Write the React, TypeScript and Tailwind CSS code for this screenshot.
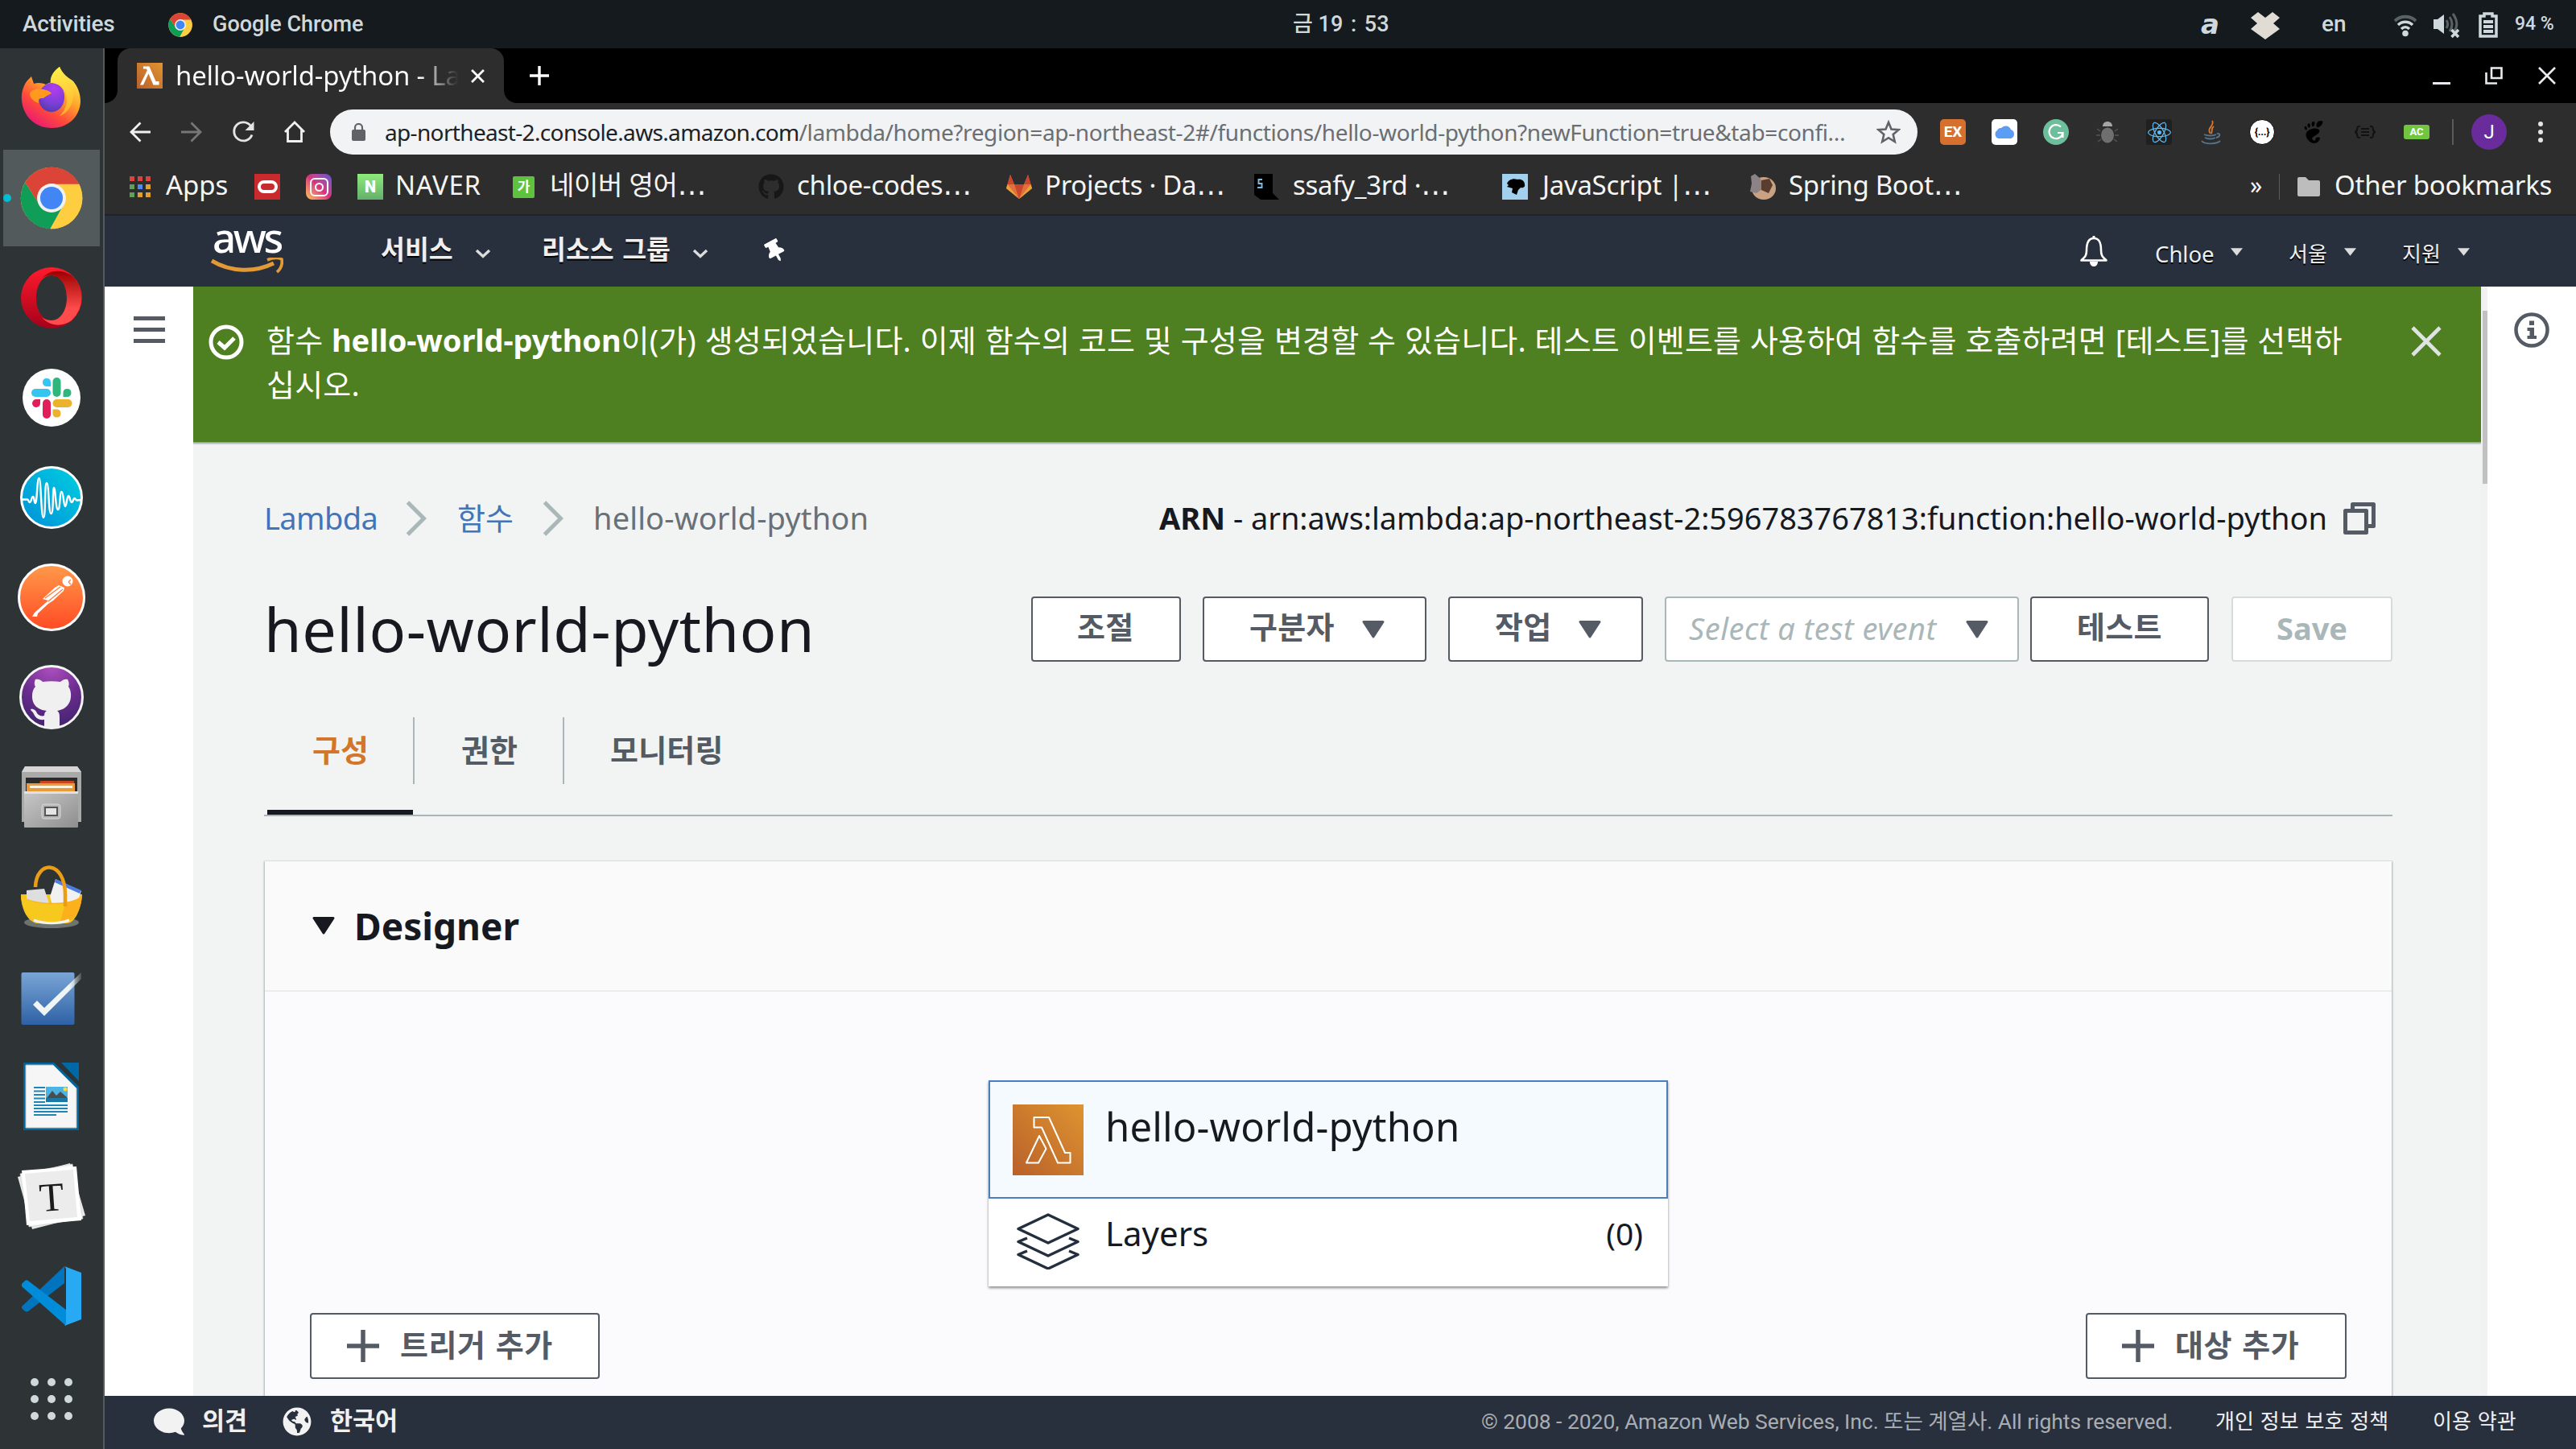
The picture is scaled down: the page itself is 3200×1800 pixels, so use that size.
import React from "react";
import { FaGithub, FaReact, FaThumbtack, FaGlobeAmericas, FaComment } from "react-icons/fa";
import { SiGnome } from "react-icons/si";

const NOTO = "font-['Noto_Sans','Noto_Sans_CJK_KR',sans-serif]";
const ROBOTO = "font-['Roboto','Noto_Sans_CJK_KR',sans-serif]";

type SvgProps = { className: string };

/* ---------- shared glyphs ---------- */

function ChromeLogo({ className }: SvgProps) {
  return (
    <svg viewBox="0 0 100 100" className={className}>
      <circle cx="50" cy="50" r="49" fill="#ffcd40" />
      <path d="M8 25 L31 61 L69 61 L48 99 A49 49 0 0 1 8 25 Z" fill="#0f9d58" />
      <path d="M50 28 H94 A49 49 0 0 1 48 99 L70 60 Z" fill="#ffcd40" />
      <path d="M8 25 A49 49 0 0 1 94 28 L50 28 L31 61 Z" fill="#db4437" />
      <circle cx="50" cy="50" r="23" fill="#f1f1f1" />
      <circle cx="50" cy="50" r="18" fill="#4285f4" />
    </svg>
  );
}

function LambdaFill({ className }: SvgProps) {
  return (
    <svg viewBox="0 0 32 32" className={className}>
      <defs>
        <linearGradient id="lf" x1="0" y1="1" x2="1" y2="0">
          <stop offset="0" stopColor="#b9602a" />
          <stop offset="1" stopColor="#e09432" />
        </linearGradient>
      </defs>
      <rect width="32" height="32" fill="url(#lf)" />
      <path d="M8 4.500h7.500l8 18.500h4v4.500h-7l-6-14-6.500 14H4l9-18.500-1.500-1.500H8z" fill="#fff" />
    </svg>
  );
}

function LambdaLine({ className }: SvgProps) {
  return (
    <svg viewBox="0 0 88 88" className={className}>
      <defs>
        <linearGradient id="ll" x1="0" y1="1" x2="1" y2="0">
          <stop offset="0" stopColor="#b9602a" />
          <stop offset="1" stopColor="#de9430" />
        </linearGradient>
      </defs>
      <rect width="88" height="88" fill="url(#ll)" />
      <g fill="none" stroke="#fff" strokeWidth="2" strokeLinejoin="round">
        <path d="M26.500 16H45L65 60H71.500V72.500H56L36 28.500H26.500Z" />
        <path d="M33 39L41.500 55L32 72.500H17Z" />
      </g>
    </svg>
  );
}

function Caret({ className }: SvgProps) {
  return (
    <svg viewBox="0 0 28 22" className={className}>
      <path d="M2 1.500H26L14 20Z" fill="currentColor" stroke="currentColor" strokeWidth="3" strokeLinejoin="round" />
    </svg>
  );
}

function NavChevron({ className }: SvgProps) {
  return (
    <svg viewBox="0 0 20 12" className={className}>
      <path d="M2 2L10 9.500L18 2" fill="none" stroke="#dcdcdc" strokeWidth="3.400" />
    </svg>
  );
}

function SmallCaret({ className }: SvgProps) {
  return (
    <svg viewBox="0 0 16 10" className={className}>
      <path d="M0 0H16L8 10Z" fill="#dcdcdc" />
    </svg>
  );
}

/* ---------- dock icons ---------- */

function Firefox() {
  return (
    <svg viewBox="0 0 76 78" className="mb-[2px] h-[78px] w-[76px]">
      <defs>
        <linearGradient id="ff1" x1="0.800" y1="0.100" x2="0.200" y2="1">
          <stop offset="0" stopColor="#fff04a" />
          <stop offset="0.350" stopColor="#ffa32b" />
          <stop offset="0.650" stopColor="#ff4a3a" />
          <stop offset="1" stopColor="#e5127e" />
        </linearGradient>
        <linearGradient id="ff3" x1="0.500" y1="0" x2="0.600" y2="1">
          <stop offset="0" stopColor="#fff04a" />
          <stop offset="1" stopColor="#ffb02c" />
        </linearGradient>
        <radialGradient id="ff2" cx="0.600" cy="0.200" r="0.900">
          <stop offset="0" stopColor="#b23cf0" />
          <stop offset="0.600" stopColor="#7a3fd6" />
          <stop offset="1" stopColor="#4a3a9c" />
        </radialGradient>
      </defs>
      <path d="M48 1C52 10 58 14 64 18C70 24 74 34 74 44C73 64 58 77 38 77C17 77 2 61 1 42C0 32 4 22 9 17L13 13L16 22C21 20 27 21 31 23C34 21 37 21 38 19C37 12 42 5 48 1Z" fill="url(#ff1)" />
      <path d="M22 40C22 28 30 21 40 21C49 22 55 30 54 40C53 51 46 57 38 57C29 57 22 50 22 40Z" fill="url(#ff2)" />
      <path d="M11 34C14 28 23 28 28 29C33 30 37 32 38 34C34 36 30 38 28 40C24 40 21 40 22 46C16 44 11 40 11 34Z" fill="#ff9a1f" />
      <path d="M48 1C38 8 36 16 37 21C48 21 58 30 57 45C55 54 52 58 48 62C60 58 68 44 66 20C57 16 51 9 48 1Z" fill="url(#ff3)" />
    </svg>
  );
}

function Opera() {
  return (
    <svg viewBox="0 0 78 78" className="h-[78px] w-[78px]">
      <defs>
        <linearGradient id="op1" x1="0" y1="0" x2="0" y2="1">
          <stop offset="0" stopColor="#ff1b2d" />
          <stop offset="1" stopColor="#a5001a" />
        </linearGradient>
        <linearGradient id="op2" x1="0" y1="0" x2="0" y2="1">
          <stop offset="0" stopColor="#9c0000" />
          <stop offset="0.700" stopColor="#ff4b4b" />
        </linearGradient>
      </defs>
      <path fillRule="evenodd" d="M39 1A38 38 0 1 0 39 77A38 38 0 1 0 39 1ZM39 11C50 11 58 23 58 39S50 67 39 67S20 55 20 39S28 11 39 11Z" fill="url(#op1)" />
      <path d="M27 15C36 4 50 3 64 11A38 38 0 0 1 64 67C52 76 36 74 27 63C31 66 35 67 39 67C50 67 58 55 58 39S50 11 39 11C34 11 30 12 27 15Z" fill="url(#op2)" />
    </svg>
  );
}

function Slack() {
  return (
    <svg viewBox="0 0 72 72" className="h-[72px] w-[72px]">
      <circle cx="36" cy="36" r="36" fill="#fff" />
      <g fill="#36c5f0"><rect x="11" y="25" width="24" height="10" rx="5" /><path d="M35 22H29.500a5 5 0 1 1 5.500-5.500Z" /></g>
      <g fill="#2eb67d"><rect x="37.500" y="11" width="10" height="24" rx="5" /><path d="M50.500 35V29.500a5 5 0 1 1 5.500 5.500Z" /></g>
      <g fill="#ecb22e"><rect x="37.500" y="38" width="24" height="10" rx="5" /><path d="M37.500 50.500H43a5 5 0 1 1-5.500 5.500Z" /></g>
      <g fill="#e01e5a"><rect x="25" y="38" width="10" height="24" rx="5" /><path d="M22 38V43a5 5 0 1 1-5.500-5Z" /></g>
    </svg>
  );
}

function Wave() {
  return (
    <svg viewBox="0 0 78 78" className="h-[78px] w-[78px]">
      <defs>
        <linearGradient id="wv" x1="0" y1="1" x2="1" y2="0">
          <stop offset="0" stopColor="#0090d8" />
          <stop offset="1" stopColor="#00cfe0" />
        </linearGradient>
      </defs>
      <circle cx="39" cy="39" r="37.500" fill="url(#wv)" stroke="#fff" strokeWidth="3" />
      <path d="M2 41.500H9C11 41.500 10 45 12 45S14 38 16 38S17 46 19 46C21 46 21 15 23.500 15S26 64 29 64S30 21 33 21S35 59 38.500 59S40 27 42 27S44 54 47 54S49 32 51.500 32S54 50 56 50S58 37 60 37S62 45 64 45S66 40 67.500 40S69 43 71 42.500L76 42" fill="none" stroke="#fff" strokeWidth="2.400" strokeLinejoin="round" />
    </svg>
  );
}

function Postman() {
  return (
    <svg viewBox="0 0 84 84" className="h-[84px] w-[84px]">
      <defs>
        <linearGradient id="pm" x1="0" y1="0" x2="0" y2="1">
          <stop offset="0" stopColor="#ff9a4a" />
          <stop offset="1" stopColor="#ff4a24" />
        </linearGradient>
      </defs>
      <circle cx="42" cy="42" r="40.500" fill="url(#pm)" stroke="#fff" strokeWidth="3" />
      <circle cx="62" cy="22" r="6.500" fill="#fff" />
      <path d="M51 27L58 30L57 34L44 46L38 50L25 62L24 66H18L21 61L38 46L31 44L46 30Z" fill="#fff" />
      <path d="M34 43L53 29M38 47L56 32M63 23L66 20M63 23L66 26" stroke="#ff7a3c" strokeWidth="1.200" fill="none" />
    </svg>
  );
}

function GithubDesktop() {
  return (
    <svg viewBox="0 0 80 80" className="h-[80px] w-[80px]">
      <defs>
        <radialGradient id="gd" cx="0.500" cy="0" r="1">
          <stop offset="0" stopColor="#b050c0" />
          <stop offset="0.550" stopColor="#6a2c8e" />
          <stop offset="1" stopColor="#42246e" />
        </radialGradient>
      </defs>
      <circle cx="40" cy="40" r="38.500" fill="url(#gd)" stroke="#f5f5f5" strokeWidth="3" />
      <path d="M20 18C24 17 27 19 29 21C36 20 44 20 51 21C54 18 58 17 60 18C62 21 62 25 61 27C65 32 65 42 62 47C59 53 53 56 47 57C50 59 50 62 50 66V77C43 79 37 79 31 77V68C23 69 20 65 18 61C17 58 14 57 14 55C18 54 21 57 22 60C24 63 28 64 31 63C31 60 32 58 34 57C26 56 21 53 18 48C15 42 15 32 20 27C18 24 19 20 20 18Z" fill="#f0f0f0" />
    </svg>
  );
}

function Files() {
  return (
    <svg viewBox="0 0 76 78" className="h-[78px] w-[76px]">
      <defs>
        <linearGradient id="fl" x1="0" y1="0" x2="1" y2="1">
          <stop offset="0" stopColor="#c8c8c8" />
          <stop offset="1" stopColor="#8e8e8e" />
        </linearGradient>
      </defs>
      <path d="M5 1H70L75 8V70H1V8Z" fill="#a9a9a9" />
      <path d="M5 1H70L75 8H1Z" fill="#d6d6d6" />
      <rect x="6" y="15" width="64" height="20" fill="#2b2b2b" />
      <path d="M24 19H66V35H20Z" fill="#c8451c" />
      <rect x="7" y="22" width="60" height="14" fill="#e89a3c" />
      <rect x="11" y="25" width="53" height="3" fill="#fff3dc" />
      <rect x="4" y="32" width="67" height="45" rx="1" fill="url(#fl)" />
      <path d="M4 32H71V35H4Z" fill="#e2e2e2" />
      <rect x="26" y="48" width="23" height="18" rx="3" fill="#b8b8b8" stroke="#d8d8d8" />
      <rect x="29" y="51" width="17" height="12" fill="#555" />
      <rect x="31" y="53" width="13" height="8" fill="#e4e4e4" />
    </svg>
  );
}

function Basket() {
  return (
    <svg viewBox="0 0 78 80" className="h-[80px] w-[78px]">
      <ellipse cx="39" cy="72" rx="34" ry="7" fill="#6e7370" />
      <path d="M1 37H77C76 55 68 73 58 73H20C9 70 1 55 1 37Z" fill="#f6c51e" />
      <path d="M8 32L30 30L36 48H8Z" fill="#dedede" />
      <path d="M44 18L76 33L72 44L40 50L37 40Z" fill="#f1f1f1" />
      <path d="M44 18L76 32L74 36L43 22Z" fill="#4d7de0" />
      <path d="M1 38C12 50 66 52 77 38C76 55 68 70 58 70C44 73 30 73 20 70C9 66 2 54 1 38Z" fill="#fbb01c" />
      <path d="M1 38C10 48 40 51 56 48L50 71C38 73 28 72 20 70C9 66 2 54 1 38Z" fill="#f7c91f" />
      <path d="M19 28C20 -6 56 -6 56 38V52" fill="none" stroke="#eb9d14" strokeWidth="4.500" />
      <path d="M17 69C30 74 48 74 61 69" stroke="#f3f3f3" strokeWidth="3" fill="none" />
    </svg>
  );
}

function Tasks() {
  return (
    <svg viewBox="0 0 76 68" className="mt-[6px] h-[68px] w-[76px]">
      <defs>
        <linearGradient id="tk" x1="0" y1="0" x2="0" y2="1">
          <stop offset="0" stopColor="#7aa5d6" />
          <stop offset="1" stopColor="#2e62a6" />
        </linearGradient>
        <linearGradient id="tk2" x1="0" y1="0" x2="1" y2="0">
          <stop offset="0.750" stopColor="#f0f4f4" />
          <stop offset="1" stopColor="#f0f4f4" stopOpacity="0.150" />
        </linearGradient>
      </defs>
      <rect x="0.500" y="1" width="66" height="65" rx="2" fill="url(#tk)" />
      <path d="M15 41L20 36L29 45L75 1V9L29 55Z" fill="url(#tk2)" />
    </svg>
  );
}

function Writer() {
  return (
    <svg viewBox="0 0 70 84" className="h-[84px] w-[70px]">
      <path d="M0 0H38L69 30V84H0Z" fill="#00659c" />
      <path d="M47 0H69V23Z" fill="#0069a5" />
      <path d="M3 3H37L66 32V81H3Z" fill="#f6f6f6" stroke="#c0c0c0" />
      <g stroke="#1f85b5" strokeWidth="2">
        <path d="M13 31H27M13 35.500H27M13 40H27M13 44.500H27M13 49H27M13 53H55M13 57H55M13 61H55M13 65H41" />
      </g>
      <rect x="28" y="30" width="27" height="19" fill="#4cb4e4" />
      <path d="M29 44L36 35L41 41L46 36L54 43V45H29Z" fill="#4c4c4c" />
      <rect x="28" y="44" width="27" height="5" fill="#1878a8" />
      <circle cx="52" cy="33" r="2.500" fill="#f3dc3b" />
    </svg>
  );
}

function Typora() {
  return (
    <svg viewBox="0 0 84 84" className="h-[84px] w-[84px]">
      <path d="M0 18L65 1L84 66L18 83Z" fill="#e8e8e8" />
      <path d="M3 14L68 2L81 70L14 80Z" fill="#f7f7f7" stroke="#ccc" strokeWidth="0.600" />
      <path d="M5 10L73 5L79 72L11 78Z" fill="#fff" />
      <path d="M9 14L69 9L74 68L15 73Z" fill="#ececec" />
      <text x="42" y="60" textAnchor="middle" fontSize="50" transform="rotate(-4 42 42)" fill="#1c1c1c" className="font-['Liberation_Serif',serif]">T</text>
    </svg>
  );
}

function VSCode() {
  return (
    <svg viewBox="0 0 76 76" className="h-[76px] w-[76px]">
      <path d="M1 51L54 1V22L9 57C7 58 5 57 4 56L1 53Z" fill="#0074bc" />
      <path d="M1 25V23L5 19C6 18 8 18 9 19L56 55V75L1 26Z" fill="#008cd8" />
      <path d="M54 1L75 9V67L54 75C55 74 56 73 56 71V5C56 3 55 2 54 1Z" fill="#27aaf3" />
    </svg>
  );
}

function AppsDots() {
  return (
    <div className="mt-[8px] grid grid-cols-3 gap-[11px]">
      {[0, 1, 2, 3, 4, 5, 6, 7, 8].map((i) => (
        <span key={i} className="size-[10px] rounded-full bg-[#cfd8dc]" />
      ))}
    </div>
  );
}

const dock = [Firefox, null, Opera, Slack, Wave, Postman, GithubDesktop, Files, Basket, Tasks, Writer, Typora, VSCode, AppsDots];

function Dock() {
  return (
    <aside className="flex h-[1740px] w-[130px] shrink-0 flex-col gap-1 border-r-2 border-[#555a5c] bg-[#2e3436] pt-[2px]">
      {dock.map((Icon, i) =>
        Icon ? (
          <div key={i} className="ml-[4px] flex h-[120px] w-[120px] shrink-0 items-center justify-center">
            <Icon />
          </div>
        ) : (
          <div key={i} className="relative ml-[4px] flex h-[120px] w-[120px] shrink-0 items-center justify-center bg-[#535a5b]">
            <span className="absolute top-[55px] left-0 size-[10px] rounded-full bg-[#00bcd4]" />
            <ChromeLogo className="size-[78px]" />
          </div>
        )
      )}
    </aside>
  );
}

/* ---------- system bar ---------- */

function SystemBar() {
  return (
    <header className={`flex h-[60px] w-full items-center bg-[#151a1e] text-[27px] font-medium whitespace-nowrap text-[#cfd8dc] ${ROBOTO}`}>
      <span className="ml-[28px] w-[181px] text-[28px] tracking-[-0.2px]">Activities</span>
      <ChromeLogo className="mt-[2px] size-[30px]" />
      <span className="ml-[25px] w-[1342px]">Google Chrome</span>
      <span className="w-[1128px]">금 19 <span className="mx-[3px]">:</span> 53</span>
      <span className="w-[62px] font-['DejaVu_Sans',sans-serif] text-[34px] leading-none font-bold italic">a</span>
      <svg viewBox="0 0 36 34" className="mt-[4px] h-[34px] w-[36px]">
        <path d="M9 0L18 7L27 0L36 7L28 14L36 21L18 34L0 21L8 14L0 7Z" fill="#e0dbd3" />
      </svg>
      <span className="ml-[52px] w-[90px] text-[28px]">en</span>
      <svg viewBox="0 0 28 28" className="mt-[4px] h-[28px] w-[28px]">
        <path d="M1 8C8 1 20 1 27 8" stroke="#5a6165" strokeWidth="4" fill="none" />
        <path d="M5 13C10 8 18 8 23 13M9 18C12 15 16 15 19 18" stroke="#cfd8dc" strokeWidth="3.500" fill="none" />
        <circle cx="14" cy="23.500" r="3.800" fill="#cfd8dc" />
      </svg>
      <svg viewBox="0 0 34 32" className="mt-[4px] ml-[21px] h-[32px] w-[34px]">
        <path d="M0 8H5L13 2V26L5 20H0Z" fill="#cfd8dc" />
        <path d="M16 9C18 12 18 16 16 19M20 5C24 11 24 17 20 23M24 1C30 9 30 17 26 22" stroke="#5a6165" strokeWidth="3" fill="none" />
        <path d="M22.500 21L31 30M31 21L22.500 30" stroke="#cfd8dc" strokeWidth="3.500" />
      </svg>
      <svg viewBox="0 0 24 32" className="mt-[2px] ml-[22px] h-[32px] w-[24px]">
        <path d="M7 2H17V5H22V30H2V5H7Z" fill="none" stroke="#cfd8dc" strokeWidth="3.500" />
        <path d="M6 12H18M6 18H18M6 24H18" stroke="#cfd8dc" strokeWidth="4" />
      </svg>
      <span className="ml-[21px] text-[23px]">94 %</span>
    </header>
  );
}

/* ---------- browser chrome ---------- */

function TabStrip() {
  return (
    <div className="flex h-[68px] items-center bg-black">
      <div className="flex h-full w-[16px] items-end bg-[#2d2d2d]">
        <div className="h-full w-full rounded-br-[16px] bg-black" />
      </div>
      <div className="flex h-full w-[480px] items-center rounded-t-[16px] bg-[#2d2d2d]">
        <LambdaFill className="ml-[24px] size-[32px]" />
        <span className={`ml-[16px] w-[355px] overflow-hidden bg-linear-to-r from-white from-85% to-transparent to-[99%] bg-clip-text text-[33px] whitespace-nowrap text-transparent ${NOTO} tracking-[-0.2px]`}>
          hello-world-python - La
        </span>
        <svg viewBox="0 0 16 16" className="ml-[12px] size-[17px]">
          <path d="M1 1L15 15M15 1L1 15" stroke="#fff" strokeWidth="2.600" />
        </svg>
      </div>
      <div className="h-full w-[16px] bg-[#2d2d2d]">
        <div className="h-full w-full rounded-bl-[16px] bg-black" />
      </div>
      <svg viewBox="0 0 24 24" className="ml-[16px] size-[24px]">
        <path d="M12 0V24M0 12H24" stroke="#fff" strokeWidth="3.400" />
      </svg>
      <div className="mr-[25px] ml-auto flex items-center">
        <svg viewBox="0 0 22 22" className="size-[22px]"><path d="M0 20.500H22" stroke="#e8eaed" strokeWidth="3" /></svg>
        <svg viewBox="0 0 22 22" className="ml-[43px] size-[22px]">
          <path d="M8 1.500H20.500V14H8ZM1.500 7V20.500H15" fill="none" stroke="#e8eaed" strokeWidth="2.600" />
        </svg>
        <svg viewBox="0 0 22 22" className="ml-[44px] size-[22px]"><path d="M1 1L21 21M21 1L1 21" stroke="#e8eaed" strokeWidth="2.600" /></svg>
      </div>
    </div>
  );
}

function Toolbar() {
  return (
    <div className="flex h-[72px] items-center bg-[#2d2d2d]">
      <svg viewBox="0 0 26 26" className="ml-[31px] size-[26px]"><path d="M26 13H2M13.500 1.500L2 13L13.500 24.500" fill="none" stroke="#f1f1f1" strokeWidth="2.800" /></svg>
      <svg viewBox="0 0 26 26" className="ml-[38px] size-[26px]"><path d="M0 13H24M12.500 1.500L24 13L12.500 24.500" fill="none" stroke="#777" strokeWidth="2.800" /></svg>
      <svg viewBox="0 0 28 28" className="ml-[37px] size-[28px]">
        <path d="M23.500 6.500A11.500 11.500 0 1 0 25 17.500" fill="none" stroke="#e4e4e4" strokeWidth="2.900" />
        <path d="M27.500 1V12H16.500Z" fill="#e4e4e4" />
      </svg>
      <svg viewBox="0 0 28 28" className="ml-[36px] size-[28px]">
        <path d="M2 14L14 2L26 14M5.500 11V25.500H22.500V11" fill="none" stroke="#f1f1f1" strokeWidth="2.800" />
      </svg>
      <div className="ml-[30px] flex h-[56px] w-[1972px] shrink-0 items-center rounded-full bg-[#f1f3f4]">
        <svg viewBox="0 0 17 22" className="ml-[27px] h-[22px] w-[17px]">
          <path d="M4 9V5.500a4.500 4.500 0 0 1 9 0V9" fill="none" stroke="#5f6368" strokeWidth="2.200" />
          <rect y="8" width="17" height="14" rx="2" fill="#5f6368" />
        </svg>
        <span className={`ml-[24px] w-[1853px] text-[28px] whitespace-nowrap text-[#202124] ${NOTO} tracking-[-0.66px]`}>
          ap-northeast-2.console.aws.amazon.com
          <span className="tracking-[-0.38px] text-[#6b6e72]">/lambda/home?region=ap-northeast-2#/functions/hello-world-python?newFunction=true&amp;tab=confi…</span>
        </span>
        <svg viewBox="0 0 30 30" className="h-[30px] w-[30px]">
          <path d="M15 3L18.500 11.500L27.500 12.200L20.700 18L22.800 27L15 22.200L7.200 27L9.300 18L2.500 12.200L11.500 11.500Z" fill="none" stroke="#5f6368" strokeWidth="2.600" />
        </svg>
      </div>
      <div className="ml-[28px] flex w-[640px] shrink-0 items-center gap-[32px]">
        <span className={`flex size-[32px] items-center justify-center rounded-[5px] bg-[#d6702f] text-[19px] font-bold text-white ${ROBOTO}`}>EX</span>
        <span className="flex size-[32px] items-center justify-center rounded-[5px] bg-white">
          <svg viewBox="0 0 26 18" className="h-[18px] w-[26px]"><path d="M6 17A5.500 5.500 0 0 1 4 7A5 5 0 0 1 9 4A7 7 0 0 1 21 6A5.800 5.800 0 0 1 21 17Z" fill="#5b9df5" /></svg>
        </span>
        <span className="flex size-[32px] items-center justify-center rounded-full bg-[#6dbf9c]">
          <svg viewBox="0 0 20 20" className="size-[20px]"><path d="M16 3.500A8.500 8.500 0 1 0 18.500 11H12M18.500 11V17" fill="none" stroke="#fff" strokeWidth="2.200" /></svg>
        </span>
        <svg viewBox="0 0 32 32" className="size-[32px]">
          <ellipse cx="16" cy="20" rx="8" ry="9.500" fill="#6f6f6f" />
          <path d="M10 9C10 1 22 1 22 9Z" fill="#a5a5a5" />
          <path d="M7 15L3 12M7 20H2M8 25L4 28M25 15L29 12M25 20H30M24 25L28 28" stroke="#555" strokeWidth="1.500" />
        </svg>
        <span className="flex size-[32px] items-center justify-center rounded-[3px] bg-[#202020]"><FaReact className="size-[29px] text-[#61b9f0]" /></span>
        <svg viewBox="0 0 32 32" className="size-[32px]">
          <path d="M18 2C22 8 10 11 16 18M20 9C16 12 19 14 17 18" stroke="#d9772a" strokeWidth="1.800" fill="none" />
          <path d="M8 19C12 21 20 21 23 19M9 23C13 25 19 25 22 23M5 27C9 32 24 31 28 27M24 18C29 17 28 22 23 23" stroke="#56748f" strokeWidth="1.800" fill="none" />
        </svg>
        <span className={`flex size-[32px] items-center justify-center rounded-full border border-black bg-white text-[13px] font-bold tracking-tight text-black ${ROBOTO}`}>{"{...}"}</span>
        <span className="flex size-[32px] items-center justify-center"><SiGnome className="size-[28px] text-black" /></span>
        <svg viewBox="0 0 32 32" className="size-[32px]">
          <path d="M10 9C3 8 9 16 3 16C9 16 3 24 10 23M22 9C29 8 23 16 29 16C23 16 29 24 22 23M11 12H21M11 16H21M11 20H21" fill="none" stroke="#121212" strokeWidth="2" />
        </svg>
        <span className={`flex h-[18px] w-[32px] items-center justify-center rounded-[3px] bg-[#72c63f] text-[13px] font-bold text-white ${ROBOTO}`}>AC</span>
      </div>
      <div className="ml-[-4px] h-[32px] w-[2px] bg-[#5a5a5a]" />
      <span className={`ml-[22px] flex size-[44px] items-center justify-center rounded-full bg-[#6a2b9c] text-[24px] text-white ${ROBOTO}`}>J</span>
      <div className="ml-[39px] flex flex-col gap-[4px]">
        <span className="size-[6px] rounded-full bg-[#e4e4e4]" />
        <span className="size-[6px] rounded-full bg-[#e4e4e4]" />
        <span className="size-[6px] rounded-full bg-[#e4e4e4]" />
      </div>
    </div>
  );
}

const appColors = ["bg-[#d9453d]", "bg-[#d9453d]", "bg-[#d9453d]", "bg-[#5f9f5a]", "bg-[#4d8bf0]", "bg-[#e0a030]", "bg-[#5f9f5a]", "bg-[#e0a030]", "bg-[#e0a030]"];

function Title({ text, className }: { text: string; className: string }) {
  return (
    <span className={`flex items-baseline pb-[4px] tracking-[-0.3px] ${className}`}>
      {text}
      <span className="font-['DejaVu_Sans',sans-serif] text-[36px] leading-[40px]">…</span>
    </span>
  );
}

function Bookmarks() {
  return (
    <div className={`flex h-[68px] items-center border-b-2 border-[#222] bg-[#2d2d2d] pb-[2px] text-[33px] leading-[44px] whitespace-nowrap text-[#f5f5f5] ${NOTO}`}>
      <div className="ml-[31px] grid w-[26px] grid-cols-3 gap-[4px]">
        {appColors.map((c, i) => (
          <span key={i} className={`h-[6px] w-[6px] ${c}`} />
        ))}
      </div>
      <span className="ml-[19px] w-[110px] pb-[4px] tracking-[-0.1px]">Apps</span>
      <span className="flex size-[32px] shrink-0 items-center justify-center bg-[#c92a2e]">
        <span className="h-[16px] w-[25px] rounded-full border-4 border-white" />
      </span>
      <span className="ml-[32px] flex size-[32px] shrink-0 items-center justify-center rounded-[8px] bg-linear-to-tr from-[#fec04a] via-[#d8317d] to-[#5a4fcf]">
        <span className="flex size-[23px] items-center justify-center rounded-[6px] border-2 border-white">
          <span className="size-[11px] rounded-full border-2 border-white" />
        </span>
      </span>
      <span className={`ml-[32px] flex size-[32px] shrink-0 items-center justify-center bg-linear-to-b from-[#8eeb7a] to-[#64b06c] text-[20px] font-black text-white ${ROBOTO}`}>N</span>
      <span className="ml-[15px] w-[146px] pb-[4px] tracking-[0.6px]">NAVER</span>
      <span className="flex h-[27px] w-[27px] shrink-0 items-center justify-center rounded-[2px] bg-[#5fc23f] text-[17px] font-bold text-white">가</span>
      <Title text="네이버 영어" className="ml-[19px] w-[259px]" />
      <FaGithub className="size-[32px] shrink-0 text-[#171717]" />
      <Title text="chloe-codes" className="ml-[16px] w-[260px]" />
      <svg viewBox="0 0 32 30" className="h-[30px] w-[32px] shrink-0">
        <path d="M16 30L0 17L5 0L10 12H22L27 0L32 17Z" fill="#e2703a" />
        <path d="M5 0L10 12H1.500ZM27 0L22 12H30.500Z" fill="#c9452c" />
        <path d="M10 12H22L16 30Z" fill="#c9452c" />
        <path d="M0 17L1.500 12L16 30ZM32 17L30.500 12L16 30Z" fill="#e8a33a" />
      </svg>
      <Title text="Projects · Da" className="ml-[16px] w-[260px]" />
      <svg viewBox="0 0 32 32" className="size-[32px] shrink-0">
        <path d="M0 0H23V24L31 32H8L0 26Z" fill="#000" />
        <path d="M10 7H5.500V12H9.500V17H4" fill="none" stroke="#7fb8dc" strokeWidth="2" />
      </svg>
      <Title text="ssafy_3rd ·" className="ml-[16px] w-[260px]" />
      <svg viewBox="0 0 32 32" className="size-[32px] shrink-0">
        <rect width="32" height="32" fill="#a2d0ee" />
        <path d="M6 12C8 7 14 5 19 7C24 6 28 9 28 13C29 16 26 18 23 17L20 20L18 26L12 23L13 18L6 16L8 14Z" fill="#000" />
      </svg>
      <Title text="JavaScript |" className="ml-[18px] w-[258px]" />
      <svg viewBox="0 0 32 32" className="size-[32px] shrink-0">
        <ellipse cx="17" cy="18" rx="15" ry="14" fill="#c9a283" />
        <path d="M1 3L6 0L13 6L16 18L8 24L0 22L2 12Z" fill="#8b8385" />
        <path d="M14 8L24 6L28 14L23 24L14 20Z" fill="#5a3d2c" />
      </svg>
      <Title text="Spring Boot" className="ml-[16px] w-[573px]" />
      <span className="w-[36px] pb-[4px] text-[30px]">»</span>
      <span className="h-[32px] w-px bg-[#5a5a5a]" />
      <svg viewBox="0 0 28 24" className="ml-[22px] h-[24px] w-[28px]"><path d="M2 0H10L14 4H26Q28 4 28 6V22Q28 24 26 24H2Q0 24 0 22V2Q0 0 2 0Z" fill="#bdbdbd" /></svg>
      <span className="ml-[18px] pb-[4px] tracking-[-0.2px]">Other bookmarks</span>
    </div>
  );
}

/* ---------- console ---------- */

function AwsNav() {
  return (
    <nav className={`flex h-[88px] items-center bg-[#282f3d] whitespace-nowrap text-[#efefef] [text-shadow:0_2px_0_#000] ${NOTO}`}>
      <div className="ml-[132px] flex w-[90px] flex-col items-start [text-shadow:none]">
        <span className="h-[38px] w-[90px] pl-[2px] text-[51px] leading-[24px] font-medium tracking-[-3.400px] text-white">aws</span>
        <svg viewBox="0 0 90 22" className="h-[22px] w-[90px]">
          <path d="M1 4C24 18 54 19 78 7" fill="none" stroke="#e39a36" strokeWidth="5" />
          <path d="M70 3C77 0 84 0 88 2C89 8 87 14 82 18" fill="none" stroke="#e39a36" strokeWidth="3.600" />
        </svg>
      </div>
      <span className="ml-[121px] w-[117px] pb-[4px] text-[32.500px] font-bold">서비스</span>
      <NavChevron className="mt-[6px] h-[12px] w-[20px]" />
      <span className="ml-[63px] w-[187px] pb-[4px] text-[32.500px] font-bold [word-spacing:2px]">리소스 그룹</span>
      <NavChevron className="mt-[6px] h-[12px] w-[20px]" />
      <FaThumbtack className="ml-[69px] size-[28px] -rotate-[28deg] text-white" />
      <svg viewBox="0 0 34 40" className="ml-auto h-[40px] w-[34px]">
        <path d="M17 4C9 4 8 12 8 19C8 26 6 27 1.500 31.500H32.500C28 27 26 26 26 19C26 12 25 4 17 4Z" fill="none" stroke="#fff" strokeWidth="2.600" strokeLinejoin="round" />
        <path d="M17 1V5" stroke="#fff" strokeWidth="3" />
        <path d="M12 33H22C22 41 12 41 12 33Z" fill="#fff" />
      </svg>
      <span className="ml-[59px] w-[94px] pt-[7px] text-[27.500px]">Chloe</span>
      <SmallCaret className="mt-[2px] h-[10px] w-[15px]" />
      <span className="ml-[57px] w-[69px] pt-[6px] text-[26px]">서울</span>
      <SmallCaret className="mt-[2px] h-[10px] w-[15px]" />
      <span className="ml-[57px] w-[69px] pt-[6px] text-[26px]">지원</span>
      <SmallCaret className="mt-[2px] mr-[132px] h-[10px] w-[15px]" />
    </nav>
  );
}

function Alert() {
  return (
    <div className="flex h-[193px] shrink-0 items-start bg-[#4e7f20] text-[38px] text-white shadow-[0_1px_2px_1px_rgba(0,28,36,0.4)]">
      <svg viewBox="0 0 44 44" className="mt-[47px] ml-[19px] size-[44px] shrink-0">
        <circle cx="22" cy="22" r="19" fill="none" stroke="#fff" strokeWidth="5" />
        <path d="M12 22L20 29L32 17" fill="none" stroke="#fff" strokeWidth="5" />
      </svg>
      <p className="mt-[39px] ml-[28px] w-[2600px] leading-[55px] tracking-[0.17px] whitespace-nowrap [word-spacing:0.7px]">
        함수 <b className="tracking-[-0.1px]">hello-world-python</b>이(가) 생성되었습니다. 이제 함수의 코드 및 구성을 변경할 수 있습니다. 테스트 이벤트를 사용하여 함수를 호출하려면 [테스트]를 선택하
        <br />
        십시오.
      </p>
      <svg viewBox="0 0 38 38" className="mt-[49px] ml-[64px] size-[38px] shrink-0">
        <path d="M2 2L36 36M36 2L2 36" stroke="#dfe3e4" strokeWidth="4.600" />
      </svg>
    </div>
  );
}

function Crumb({ className }: SvgProps) {
  return (
    <svg viewBox="0 0 26 44" className={className}>
      <path d="M2.500 2L22.500 22L2.500 42" fill="none" stroke="#aab7b8" strokeWidth="5" />
    </svg>
  );
}

function Breadcrumb() {
  return (
    <div className="flex h-[60px] items-center text-[38px] whitespace-nowrap">
      <span className="w-[176px] pb-[1px] tracking-[-0.6px] text-[#4274ba]">Lambda</span>
      <Crumb className="h-[44px] w-[26px]" />
      <span className="ml-[38px] w-[106px] pb-[1px] text-[#4274ba]">함수</span>
      <Crumb className="h-[44px] w-[26px]" />
      <span className="ml-[37px] pb-[1px] tracking-[0.15px] text-[#687078]">hello-world-python</span>
      <span className="ml-auto pb-[1px] tracking-[-0.03px]"><b>ARN</b> - arn:aws:lambda:ap-northeast-2:596783767813:function:hello-world-python</span>
      <svg viewBox="0 0 40 40" className="mr-[21px] ml-[20px] size-[40px]">
        <path d="M2.500 10.500H28.500V37.500H2.500ZM11.500 8V2.500H37.500V29.500H31" fill="none" stroke="#545b64" strokeWidth="5" strokeLinejoin="round" />
      </svg>
    </div>
  );
}

function ActionRow() {
  const btn = "flex h-[81px] shrink-0 items-center rounded-[4px] border-2 bg-white pb-[6px] font-bold tracking-[0.3px]";
  return (
    <div className="mt-[67px] flex h-[81px] items-center text-[38px] whitespace-nowrap text-[#545b64]">
      <h1 className="w-[953px] shrink-0 pb-[2px] text-[75.500px] leading-[79px] font-normal tracking-[0.55px] text-[#16191f]">hello-world-python</h1>
      <div className={`${btn} w-[186px] border-[#545b64] pl-[55px]`}>조절</div>
      <div className={`${btn} ml-[27px] w-[278px] border-[#545b64] pl-[56px]`}>
        <span className="w-[140px]">구분자</span>
        <Caret className="mt-[6px] h-[22px] w-[28px]" />
      </div>
      <div className={`${btn} ml-[27px] w-[242px] border-[#545b64] pl-[56px]`}>
        <span className="w-[104px]">작업</span>
        <Caret className="mt-[6px] h-[22px] w-[28px]" />
      </div>
      <div className="ml-[27px] flex h-[81px] w-[440px] shrink-0 items-center rounded-[4px] border-2 border-[#aab7b8] bg-white pl-[28px]">
        <span className="w-[344px] pb-[2px] tracking-[0.5px] text-[#aab7b8] italic">Select a test event</span>
        <Caret className="h-[22px] w-[28px]" />
      </div>
      <div className={`${btn} ml-[14px] w-[222px] border-[#545b64] pl-[56px]`}>테스트</div>
      <div className="ml-[28px] flex h-[81px] w-[200px] shrink-0 items-center justify-center rounded-[4px] border-2 border-[#d5dbdb] bg-white pb-[2px] font-bold text-[#aab7b8]">Save</div>
    </div>
  );
}

function Tabs() {
  return (
    <div className="mt-[69px] flex h-[123px] w-[2644px] items-start border-b-2 border-[#aab7b8] text-[38px] leading-[80px] font-bold text-[#545b64]">
      <div className="ml-[4px] h-[121px] w-[181px] border-b-[6px] border-[#16191f] pl-[56px] text-[#d3752c]">구성</div>
      <div className="h-[83px] w-[2px] bg-[#aab7b8]" />
      <div className="w-[184px] pl-[58px]">권한</div>
      <div className="h-[83px] w-[2px] bg-[#aab7b8]" />
      <div className="pl-[57px] tracking-[0.2px]">모니터링</div>
    </div>
  );
}

function LayersIcon() {
  return (
    <svg viewBox="0 0 78 70" className="h-[70px] w-[78px]">
      <g fill="none" stroke="#232f3e" strokeWidth="3.400" strokeLinejoin="round">
        <path d="M39 2L76 19.500L39 37L2 19.500Z" />
        <path d="M13 31L2 35.500L39 53L76 35.500L65 31" />
        <path d="M13 47L2 51.500L39 69L76 51.500L65 47" />
      </g>
    </svg>
  );
}

function AddButton({ label, className }: { label: string; className: string }) {
  return (
    <div className={`flex h-[82px] items-center rounded-[4px] border-2 border-[#545b64] bg-white text-[38px] font-bold whitespace-nowrap text-[#545b64] ${className}`}>
      <svg viewBox="0 0 40 40" className="size-[40px]"><path d="M20 0V40M0 20H40" stroke="#545b64" strokeWidth="5.500" /></svg>
      <span className="ml-[26px] pb-[4px] tracking-[0.5px] [word-spacing:2px]">{label}</span>
    </div>
  );
}

function Designer() {
  return (
    <section className="mt-[56px] ml-px h-[700px] w-[2642px] bg-[#fbfbfd] shadow-[0_1px_2px_1px_rgba(0,28,36,0.3)]">
      <div className="flex h-[162px] items-center border-b-2 border-[#eaeded] bg-[#fafafa]">
        <Caret className="ml-[59px] h-[22px] w-[28px] text-[#16191f]" />
        <h2 className="ml-[24px] text-[46px] font-bold text-[#16191f]">Designer</h2>
      </div>
      <div className="mt-[110px] ml-[899px] w-[844px] bg-white text-[#16191f] shadow-[0_2px_3px_0_rgba(0,0,0,0.45)]">
        <div className="flex h-[147px] border-2 border-[#4a7fbe] bg-[#f5faff]">
          <LambdaLine className="mt-[28px] ml-[28px] size-[88px]" />
          <span className="mt-[19px] ml-[27px] text-[49px] leading-[73px] tracking-[0.15px]">hello-world-python</span>
        </div>
        <div className="flex h-[109px] pt-[18px] pl-[35px]">
          <LayersIcon />
          <span className="ml-[32px] text-[42px] leading-[50px]">Layers</span>
          <span className="mr-[31px] ml-auto text-[39px] leading-[49px]">(0)</span>
        </div>
      </div>
      <div className="mt-[33px] flex justify-between pr-[56px] pl-[56px]">
        <AddButton label="트리거 추가" className="w-[360px] pl-[44px]" />
        <AddButton label="대상 추가" className="w-[324px] pl-[43px]" />
      </div>
    </section>
  );
}

function Console() {
  return (
    <div className={`flex h-[1378px] overflow-hidden bg-white text-[#16191f] ${NOTO}`}>
      <div className="flex w-[110px] shrink-0 flex-col items-center gap-[9px] pt-[37px]">
        <span className="h-[5px] w-[39px] bg-[#545b64]" />
        <span className="h-[5px] w-[39px] bg-[#545b64]" />
        <span className="h-[5px] w-[39px] bg-[#545b64]" />
      </div>
      <main className="flex h-full w-[2842px] shrink-0 flex-col overflow-hidden bg-[#f2f4f3]">
        <Alert />
        <div className="w-full pt-[65px] pr-[110px] pl-[88px]">
          <Breadcrumb />
          <ActionRow />
          <Tabs />
          <Designer />
        </div>
      </main>
      <div className="h-full w-[8px] shrink-0 bg-[#f1f1f1] pt-[30px] pl-[2px]">
        <div className="h-[215px] w-[6px] bg-[#c1c1c1]" />
      </div>
      <svg viewBox="0 0 44 44" className="mt-[32px] ml-[33px] size-[44px]">
        <circle cx="22" cy="22" r="19.500" fill="none" stroke="#545b64" strokeWidth="4.500" />
        <path d="M19 10.500H25V16H19ZM16.500 19H25V29H28V33H16.500V29H19.500V23H16.500Z" fill="#545b64" />
      </svg>
    </div>
  );
}

function Footer() {
  return (
    <footer className={`flex h-[66px] items-center bg-[#282f3d] pb-[2px] whitespace-nowrap text-[#f0f0f0] ${ROBOTO}`}>
      <FaComment className="ml-[61px] size-[38px] -scale-x-100 text-[#f2f2f2]" />
      <span className="ml-[22px] w-[100px] text-[30.500px] font-bold">의견</span>
      <FaGlobeAmericas className="size-[36px] text-[#f2f2f2]" />
      <span className="ml-[23px] w-[1430px] text-[30.500px] font-bold">한국어</span>
      <span className="w-[912px] text-[26.500px] tracking-[-0.06px] text-[#a9aeb3]">© 2008 - 2020, Amazon Web Services, Inc. 또는 계열사. All rights reserved.</span>
      <span className="w-[270px] text-[26px] [word-spacing:1.5px]">개인 정보 보호 정책</span>
      <span className="text-[26px] [word-spacing:1.5px]">이용 약관</span>
    </footer>
  );
}

export default function App() {
  return (
    <div className="h-[1800px] w-[3200px] overflow-hidden bg-black">
      <SystemBar />
      <div className="flex">
        <Dock />
        <div className="flex w-[3070px] shrink-0 flex-col">
          <TabStrip />
          <Toolbar />
          <Bookmarks />
          <AwsNav />
          <Console />
          <Footer />
        </div>
      </div>
    </div>
  );
}
